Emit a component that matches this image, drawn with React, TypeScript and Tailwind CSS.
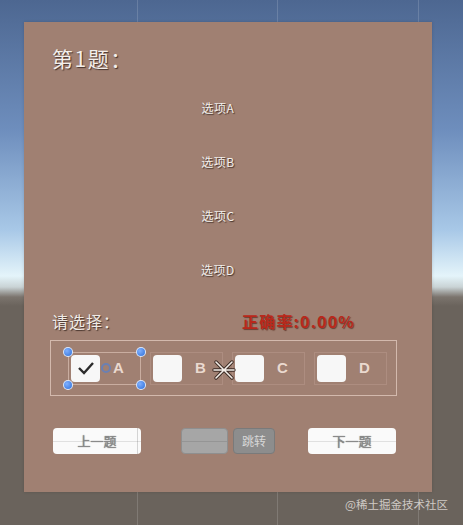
import React from 'react';

const CJK = "font-['Noto_Sans_CJK_SC','Noto_Sans',sans-serif]";
const SHADOW = '[text-shadow:1px_1px_1px_rgba(40,25,20,0.75)]';

const OPTIONS = ['选项A', '选项B', '选项C', '选项D'];
const CHOICES = [
    { key: 'A', checked: true },
    { key: 'B', checked: false },
    { key: 'C', checked: false },
    { key: 'D', checked: false },
];

function Handle({ className }: { className: string }) {
    return (
        <span
            className={`absolute w-[10px] h-[10px] rounded-full border border-white/80 bg-[radial-gradient(circle_at_35%_35%,#7fb0ff,#2f6fd8)] ${className}`}
        />
    );
}

function MoveGizmo() {
    return (
        <svg width="26" height="26" viewBox="0 0 26 26" className="absolute left-[160px] top-[16px]">
            <g stroke="#3a2a24" strokeWidth="3.4" strokeLinecap="round">
                <path d="M5 5 L21 21 M21 5 L5 21 M3 13 L23 13" />
            </g>
            <g stroke="#f4eee8" strokeWidth="1.6" strokeLinecap="round">
                <path d="M5 5 L21 21 M21 5 L5 21 M3 13 L23 13" />
            </g>
        </svg>
    );
}

function Choice({ letter, checked }: { letter: string; checked: boolean }) {
    return (
        <div
            className={`relative flex items-center w-[73px] h-[33px] border ${
                checked ? 'border-[#c9ada0]' : 'border-[#ad8d80]'
            }`}
        >
            <div className="ml-[2px] w-[29px] h-[27px] rounded-[4px] bg-[#f7f7f7] flex items-center justify-center">
                {checked && (
                    <svg width="18" height="14" viewBox="0 0 18 14">
                        <path d="M2 7 L7 12 L16 2" fill="none" stroke="#2b2b2b" strokeWidth="2.4" />
                    </svg>
                )}
            </div>
            <span className="ml-[13px] text-[15px] font-bold text-[#ead9cf] font-['Liberation_Sans',sans-serif]">
                {letter}
            </span>
            {checked && (
                <>
                    <span className="absolute left-[32px] top-[10px] w-[10px] h-[10px] rounded-full border-2 border-[#5d7fc4]/80" />
                    <Handle className="-left-[6px] -top-[6px]" />
                    <Handle className="-right-[6px] -top-[6px]" />
                    <Handle className="-left-[6px] -bottom-[6px]" />
                    <Handle className="-right-[6px] -bottom-[6px]" />
                </>
            )}
        </div>
    );
}

function WhiteButton({ label, grid }: { label: string; grid?: boolean }) {
    return (
        <button className="relative w-[88px] h-[26px] rounded-[4px] bg-[#fafafa] flex items-center justify-center">
            <span className="absolute left-0 right-0 top-[13px] h-px bg-black/10" />
            {grid && <span className="absolute left-[84px] top-0 bottom-0 w-px bg-black/15" />}
            <span className={`relative text-[13px] text-[#8a8a8a] [text-shadow:0_0_1px_#555] ${CJK}`}>{label}</span>
        </button>
    );
}

export default function App() {
    return (
        <div className="relative w-[463px] h-[525px] overflow-hidden bg-[linear-gradient(to_bottom,#4d6791_0px,#6e8ebd_130px,#a8c8e7_230px,#e4f4fa_276px,#c9d3d5_287px,#7b746d_297px,#6a635c_306px,#6a635c_100%)]">
            {/* scene grid */}
            <span className="absolute left-[137px] top-0 bottom-0 w-px bg-white/15" />
            <span className="absolute left-[277px] top-0 bottom-0 w-px bg-white/15" />
            <span className="absolute left-[418px] top-0 bottom-0 w-px bg-white/15" />

            <div className="relative pt-[22px] pl-[24px]">
                <div className={`w-[408px] h-[470px] bg-[#a08072] flex flex-col shadow-[0_0_3px_rgba(0,0,0,0.15)] ${CJK}`}>
                    <div className={`mt-[22px] pl-[28px] h-[28px] leading-[28px] text-[21px] tracking-[1.5px] text-[#f3efeb] ${SHADOW}`}>
                        第1题：
                    </div>

                    <div className="mt-[9px] flex flex-col w-[388px]">
                        {OPTIONS.map((opt) => (
                            <div
                                key={opt}
                                className={`h-[54px] flex items-center justify-center text-[12px] tracking-[0.5px] text-[#f3efeb] ${SHADOW}`}
                            >
                                {opt}
                            </div>
                        ))}
                    </div>

                    <div className="mt-[12px] h-[24px] flex items-center">
                        <span className={`ml-[28px] text-[16px] tracking-[1px] text-[#f0ebe6] ${SHADOW}`}>请选择：</span>
                        <span className="ml-[122px] text-[16px] tracking-[1.2px] font-bold text-[#b9281b] [text-shadow:1px_1px_1px_rgba(70,20,10,0.6)]">
                            正确率:0.00%
                        </span>
                    </div>

                    <div className="relative mt-[7px] ml-[26px] w-[347px] h-[56px] border border-[#d3b9ad] flex items-center gap-[9px] pl-[17px]">
                        {CHOICES.map((c) => (
                            <Choice key={c.key} letter={c.key} checked={c.checked} />
                        ))}
                        <MoveGizmo />
                    </div>

                    <div className="mt-[32px] h-[26px] flex items-center">
                        <div className="ml-[29px]">
                            <WhiteButton label="上一题" grid />
                        </div>
                        <div className="ml-[40px] relative w-[47px] h-[26px] rounded-[4px] bg-[#a6a6a6] border border-[#8f8f8f]">
                            <span className="absolute left-0 right-0 top-[12px] h-px bg-black/10" />
                        </div>
                        <button className="ml-[5px] w-[42px] h-[26px] rounded-[4px] bg-[#8d8d8d] border border-[#7a7a7a] flex items-center justify-center">
                            <span className="text-[12px] text-[#d8d8d8]">跳转</span>
                        </button>
                        <div className="ml-[33px]">
                            <WhiteButton label="下一题" />
                        </div>
                    </div>
                </div>
            </div>

            <span className={`absolute right-[15px] top-[496px] text-[11.5px] text-[#cfcac5] ${CJK}`}>
                @稀土掘金技术社区
            </span>
        </div>
    );
}
